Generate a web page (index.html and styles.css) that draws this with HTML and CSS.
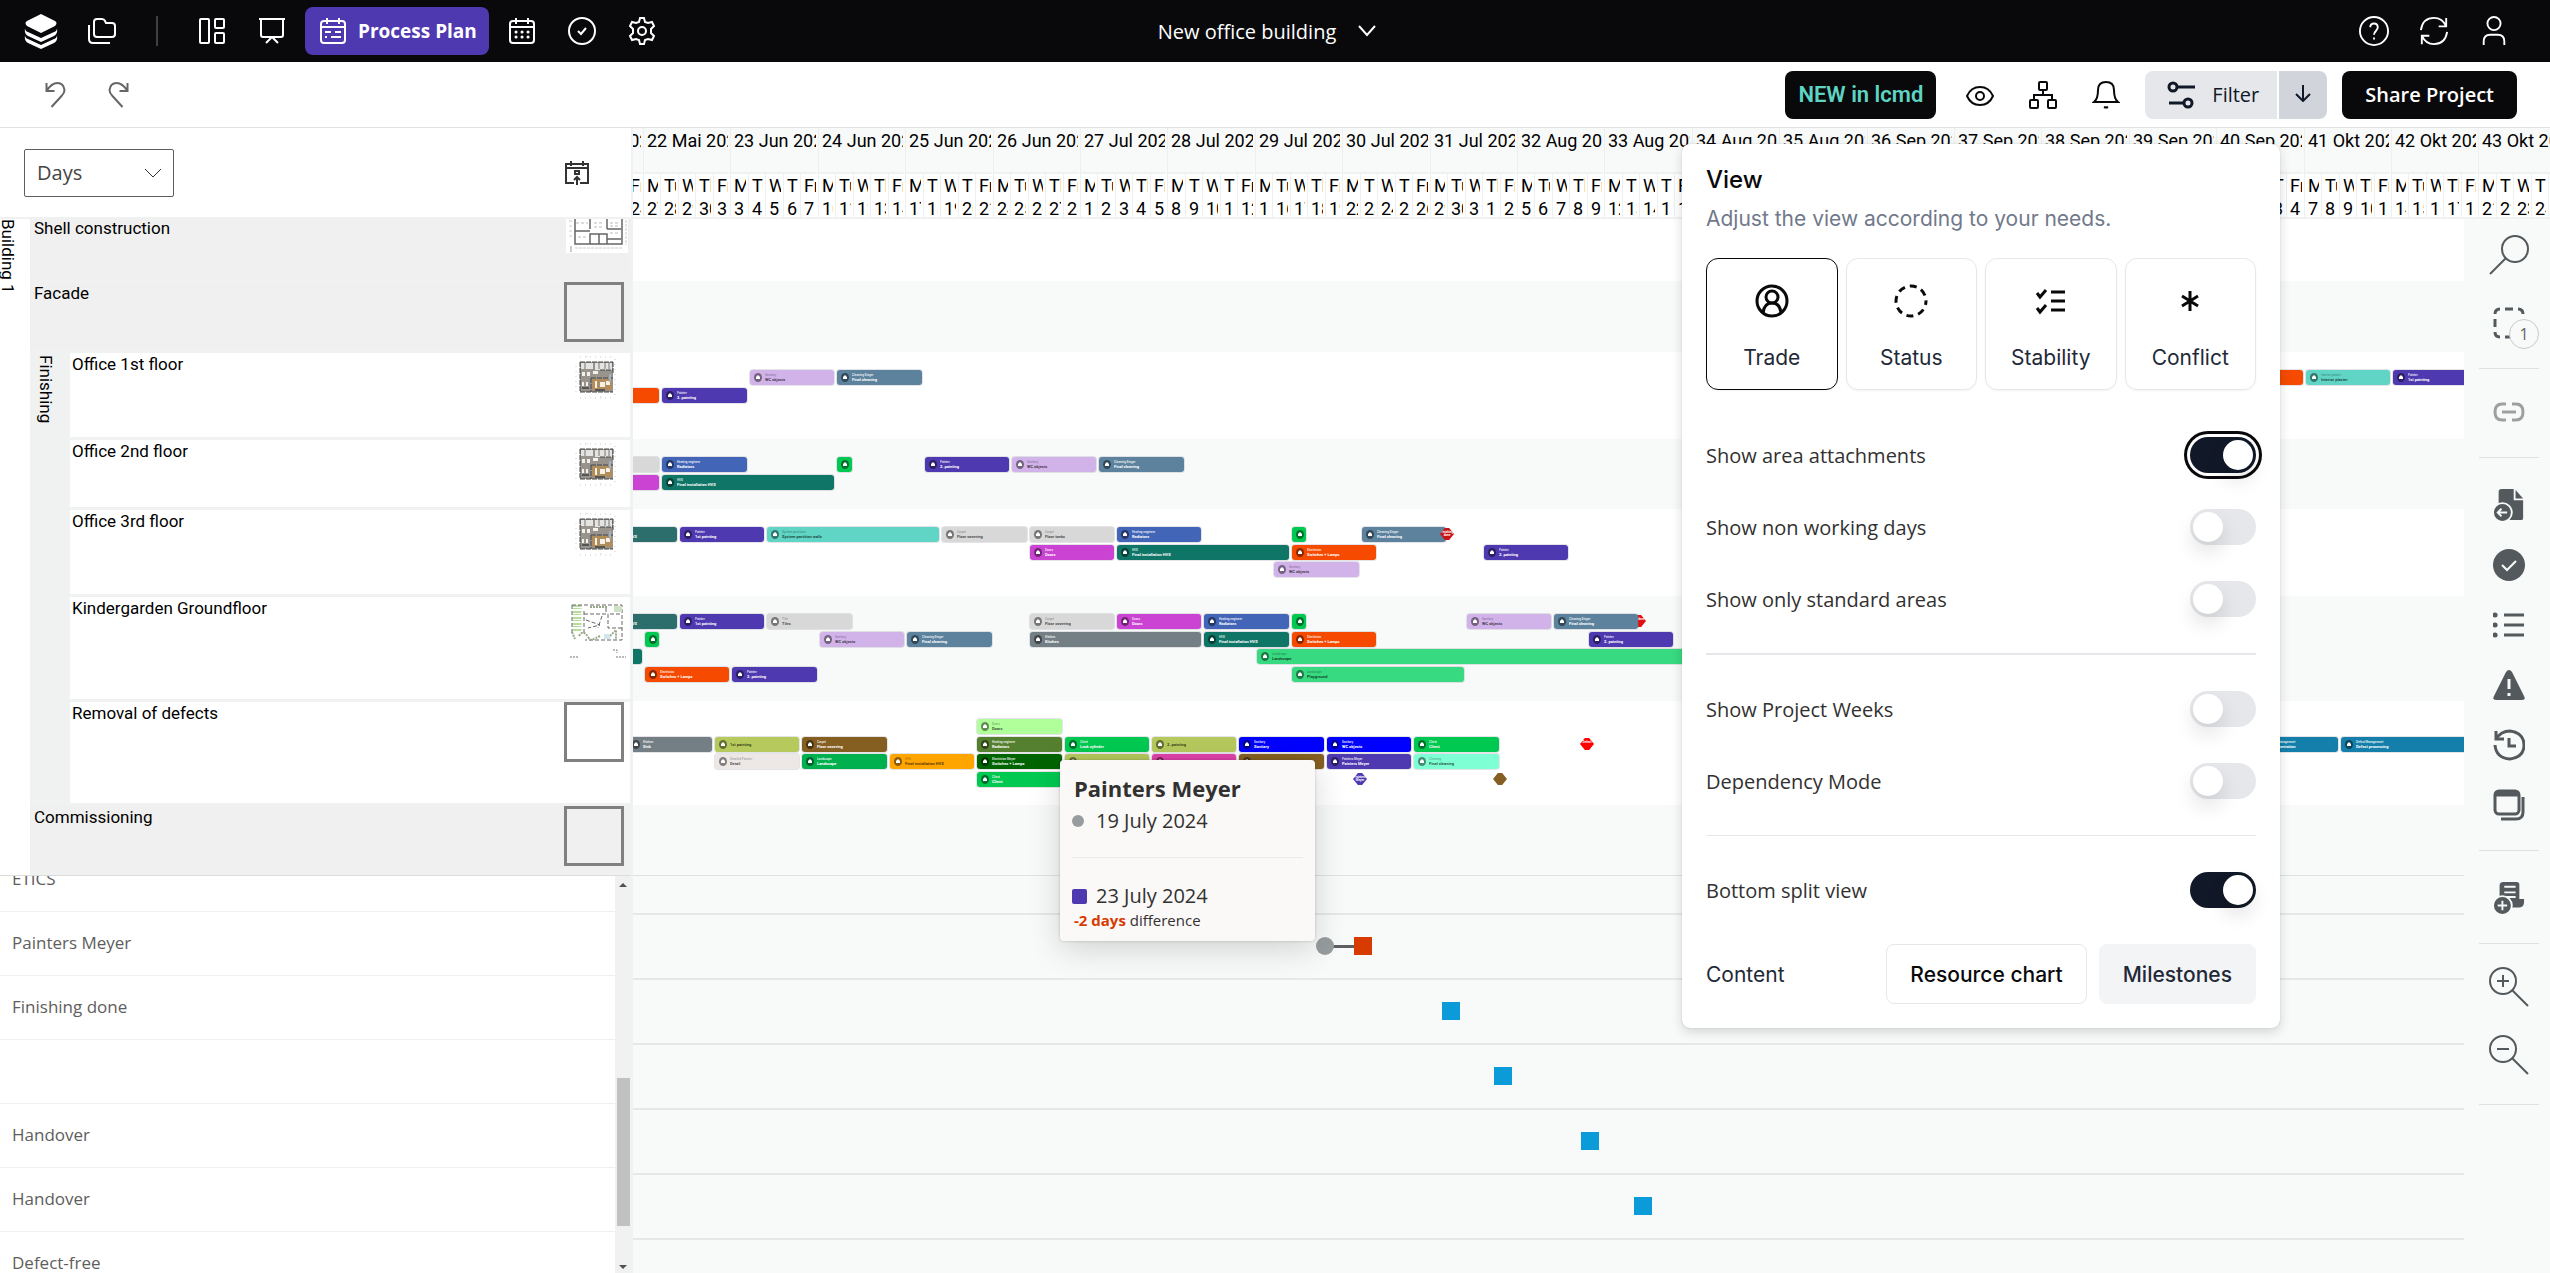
FILE: index.html
```html
<!doctype html>
<html lang="en">
<head>
    <meta charset="UTF-8">
    <meta name="viewport" content="width=device-width, initial-scale=1.0">
    <title>New office building - Process Plan</title>
    <link rel="stylesheet" href="styles.css">
</head>
<body>
    <!-- icon sprite -->
    <svg class="sprite" aria-hidden="true">
        <symbol id="i-floorplan" viewBox="0 0 44 44">
            <path d="M5 1h34M5 42h34M12 0v4M26 40v4M40 3v38M1 10v28" stroke="#ccc" stroke-dasharray="1 4"/>
            <rect x="5" y="6" width="33" height="30" fill="#98938d"/>
            <path d="M6 7h12v6H6zM20 7h17v7H20z" fill="#e4e4e2"/>
            <rect x="17" y="23" width="20" height="11" fill="#b08d5a"/>
            <path d="M5 6h33M5 36h33M5 6v30M38 6v12M16 22h22M25 14h13M16 22v14" stroke="#444" stroke-dasharray="5 1"/>
            <path d="M10 7v6M24 7v6M30 7v6M34 7v6" stroke="#777"/>
            <path d="M7 16h3v4H7zM12 16h3v4h-3zM18 15h5v3h-5zM20 25h2v7h-2zM25 26h5v5h-5zM31 25h4v4h-4zM7 26h2v4H7zM11 26h2v4h-2z" fill="#f4f1ea"/>
            <path d="M7 32h7M20 34h10" stroke="#555" stroke-width="2"/>
            <path d="M35 18v8" stroke="#9fb1c2" stroke-width="2"/>
        </symbol>
        <symbol id="i-shell" viewBox="0 0 62 34">
            <path fill="#fff" d="M0 0h62v34H0z"/>
            <path d="M9 0v25h47V0M24 0v10M41 0v10M9 12h15M41 10h14M24 25V15h17v10M33 15v10M41 20h14" stroke="#666" fill="none" stroke-width="1.5"/>
            <path d="M10 4h12M28 4h10M44 4h9M12 18h10M44 14h8M28 8h8M44 7h9" stroke="#bbb" stroke-dasharray="3 2"/>
            <path d="M9 29h47M60 1v25M3 2h4M3 7h4M3 12h4M3 17h4" stroke="#ccc" stroke-dasharray="3 1"/>
            <path d="M5 27v6" stroke="#999"/>
        </symbol>
        <symbol id="i-garden" viewBox="0 0 56 58">
            <path d="M7 3v27" stroke="#b5dd9c" stroke-width="9" stroke-dasharray="2 1 1 2"/>
            <path d="M2 3h50v35H15M2 3v28M14 9v22M14 12h22v-8M40 12h12M38 12v14h14M16 18l14 5-12 3M32 14l-4 12" stroke="#666" fill="none" stroke-dasharray="4 2"/>
            <path d="M9 34c3-5 6-4 9 1s5 2 12-1M2 30l3 7M40 34l6-6v10M20 5h18" stroke="#98a889" fill="none" stroke-width="2" stroke-dasharray="2 1"/>
            <path d="M44 4h8v6h-8z" fill="#cfe2c4"/>
            <path d="M34 32h6v5h-6z" fill="#cfe6ea"/>
            <path d="M0 55h8M46 55h11M43 48h4v3" stroke="#777" stroke-dasharray="2 1" fill="none"/>
        </symbol>
    </svg>

    <header class="topbar">
        <nav class="topbar-nav">
            <a href="#" class="logo" aria-label="Home"><svg viewBox="0 0 34 36"><path d="M17 1 31 8q3 2 0 5L17 20 3 13q-3-3 0-5z"/><path d="M1 15q0 3 3 4l13 6 13-6q3-1 3-4 1 6-3 8l-13 6-13-6q-4-2-3-8z"/><path d="M1 22q0 3 3 4l13 6 13-6q3-1 3-4 1 6-3 8l-13 6-13-6q-4-2-3-8z"/></svg></a>
            <a href="#" class="nav-icon" aria-label="Projects"><svg viewBox="0 0 28 28"><path d="M9 2h5q2 0 3 2l1 2h6q3 0 3 3v8q0 3-3 3H9q-3 0-3-3V5q0-3 3-3zM1 8v14q0 4 4 4h17"/></svg></a>
            <span class="nav-divider"></span>
            <a href="#" class="nav-icon" aria-label="Dashboard"><svg viewBox="0 0 28 28"><rect x="2" y="2" width="9" height="24" rx="1"/><rect x="17" y="2" width="9" height="9" rx="1"/><rect x="17" y="16" width="9" height="10" rx="1"/></svg></a>
            <a href="#" class="nav-icon" aria-label="Board"><svg viewBox="0 0 28 28"><path d="M1 2h26M3 2v16q0 2 2 2h18q2 0 2-2V2M14 20l-6 6M14 20l6 6"/></svg></a>
            <a href="#" class="nav-active"><svg viewBox="0 0 28 28"><rect x="2" y="4" width="24" height="22" rx="3"/><path d="M8 1v6M20 1v6M2 10h24M6 15h6M16 15h6M6 20h2M12 20h10"/></svg>Process Plan</a>
            <a href="#" class="nav-icon" aria-label="Calendar"><svg viewBox="0 0 28 28"><rect x="2" y="4" width="24" height="22" rx="3"/><path d="M8 1v6M20 1v6M2 10h24"/><path d="M8 15h.1M14 15h.1M20 15h.1M8 20h.1M14 20h.1M20 20h.1" stroke-linecap="round" stroke-width="3"/></svg></a>
            <a href="#" class="nav-icon" aria-label="Tasks"><svg viewBox="0 0 28 28"><circle cx="14" cy="14" r="13"/><path d="m10 14 3 3 5-6"/></svg></a>
            <a href="#" class="nav-icon" aria-label="Settings"><svg viewBox="0 0 28 28"><path d="m12 1-1 4-3 1-4-1-2 4 3 3v4l-3 3 2 4 4-1 3 1 1 4h4l1-4 3-1 4 1 2-4-3-3v-4l3-3-2-4-4 1-3-1-1-4z"/><circle cx="14" cy="14" r="4"/></svg></a>
        </nav>
        <button class="project-name">New office building <svg viewBox="0 0 18 12"><path d="m1 1 8 9 8-9"/></svg></button>
        <nav class="topbar-user">
            <a href="#" aria-label="Help"><svg viewBox="0 0 32 32"><circle cx="16" cy="16" r="15"/><path d="M12 12q0-4 4-4t4 4q0 2-2 4t-2 4M16 23v2"/></svg></a>
            <a href="#" aria-label="Refresh"><svg viewBox="0 0 32 32"><path d="M2 15Q4 2 16 2q9 0 13 9M29 2v9h-8M30 17q-2 13-14 13-9 0-13-9M3 30v-9h8"/></svg></a>
            <a href="#" aria-label="Account"><svg viewBox="0 0 32 32"><circle cx="16" cy="8" r="7"/><path d="M5 31v-4q0-7 7-7h8q7 0 7 7v4"/></svg></a>
        </nav>
    </header>

    <div class="toolbar">
        <div class="history">
            <button aria-label="Undo"><svg viewBox="0 0 20 26"><path d="M1 1v8h8M1 9q5-8 11-8t7 7q0 3-3 6L6 25"/></svg></button>
            <button aria-label="Redo"><svg viewBox="0 0 20 26"><path d="M19 1v8h-8M19 9q-5-8-11-8T1 8q0 3 3 6l10 11"/></svg></button>
        </div>
        <div class="tools">
            <button class="btn-dark btn-new">NEW in lcmd</button>
            <button class="tool" aria-label="View"><svg viewBox="0 0 28 28"><path d="M1 15Q5 6 14 6t13 9q-4 9-13 9T1 15z"/><circle cx="14" cy="15" r="4"/></svg></button>
            <button class="tool" aria-label="Structure"><svg viewBox="0 0 28 28"><rect x="10" y="1" width="8" height="8" rx="1"/><rect x="1" y="19" width="8" height="8" rx="1"/><rect x="19" y="19" width="8" height="8" rx="1"/><path d="M14 9v5M5 19v-5h18v5"/></svg></button>
            <button class="tool" aria-label="Notifications"><svg viewBox="0 0 28 28"><path d="M2 21q4-3 4-12 0-8 8-8t8 8q0 9 4 12zM12 26q2 1 4 0"/></svg></button>
            <div class="filter">
                <button class="filter-main"><svg viewBox="0 0 28 28"><circle cx="6" cy="6" r="4"/><path d="M11 6h17M2 22h14"/><circle cx="21" cy="22" r="4"/></svg>Filter</button>
                <button class="filter-more" aria-label="Filter options"><svg viewBox="0 0 18 18"><path d="M9 1v16M2 10l7 7 7-7"/></svg></button>
            </div>
            <button class="btn-dark">Share Project</button>
        </div>
    </div>

    <main>
        <div class="scale-row">
            <div class="scale-settings">
                <div class="select">
                    <select aria-label="Scale"><option>Days</option><option>Weeks</option></select>
                    <svg viewBox="0 0 18 10"><path d="m1 1 8 8 8-8"/></svg>
                </div>
                <button class="today" aria-label="Go to today"><svg viewBox="0 0 24 24"><path d="M9 22H1V3h22v19h-8M1 7h22M6 0v5M18 0v5M10 10h4v3h-4zM12 24v-8M9 19l3-3 3 3"/></svg></button>
            </div>
            <div class="scale" id="scale"></div>
        </div>

        <div class="workspace">
            <div class="left">
                <div class="tree">
                    <div class="building">Building 1</div>
                    <div class="area area-wide area-scrolled">Shell construction <svg class="thumb-shell"><use href="#i-shell"/></svg></div>
                    <div class="area area-wide">Facade <span class="thumb-empty"></span></div>
                    <div class="group">Finishing</div>
                    <div class="area">Office 1st floor <svg class="thumb-plan"><use href="#i-floorplan"/></svg></div>
                    <div class="area">Office 2nd floor <svg class="thumb-plan"><use href="#i-floorplan"/></svg></div>
                    <div class="area">Office 3rd floor <svg class="thumb-plan"><use href="#i-floorplan"/></svg></div>
                    <div class="area">Kindergarden Groundfloor <svg class="thumb-garden"><use href="#i-garden"/></svg></div>
                    <div class="area">Removal of defects <span class="thumb-empty"></span></div>
                    <div class="area area-wide">Commissioning <span class="thumb-empty"></span></div>
                </div>
                <div class="milestone-names">
                    <ul>
                        <li>ETICS</li>
                        <li>Painters Meyer</li>
                        <li>Finishing done</li>
                        <li></li>
                        <li>Handover</li>
                        <li>Handover</li>
                        <li>Defect-free</li>
                    </ul>
                    <div class="scrollbar">
                        <span class="arrow-up"></span>
                        <span class="thumb"></span>
                        <span class="arrow-down"></span>
                    </div>
                </div>
            </div>

            <div class="right">
                <div class="chart" id="chart"></div>
                <div class="milestones" id="milestones"></div>

                <div class="tooltip">
                    <h3>Painters Meyer</h3>
                    <p><span class="mark-old"></span>19 July 2024</p>
                    <hr>
                    <p><span class="mark-new"></span>23 July 2024</p>
                    <small><b>-2 days</b> difference</small>
                </div>
            </div>

            <aside class="rail">
                <div class="rail-group rail-search">
                    <button aria-label="Search"><svg class="large" viewBox="0 0 40 40"><circle cx="26" cy="14" r="13"/><path d="M17 23 1 39"/></svg></button>
                    <button aria-label="Selection"><svg viewBox="0 0 32 32"><path d="M2 7q0-5 5-5M12 2h8M25 2q5 0 5 5M2 12v8M2 25q0 5 5 5M12 30h6" stroke-width="3"/></svg><span class="badge">1</span></button>
                </div>
                <div class="rail-group muted">
                    <button aria-label="Link"><svg viewBox="0 0 32 32"><path d="M13 8H9q-7 0-7 8t7 8h4M19 8h4q7 0 7 8t-7 8h-4M9 16h14" stroke-width="3"/></svg></button>
                </div>
                <div class="rail-group rail-main">
                    <button aria-label="Import"><svg viewBox="0 0 32 34"><path class="solid" d="M8 0h13v12h10v19q0 2-2 2H8q-3 0-3-3V3q0-3 3-3z"/><path class="solid" d="m23 1 8 9h-8z"/><circle class="ring" cx="9" cy="25" r="10"/><path class="cut" d="M4 25h10M8 21l-4 4 4 4"/></svg></button>
                    <button aria-label="Done"><svg viewBox="0 0 32 32"><circle class="solid" cx="16" cy="16" r="16"/><path class="cut" d="m9 16 5 5 9-9"/></svg></button>
                    <button aria-label="List"><svg viewBox="0 0 32 32"><path d="M11 6h20M11 16h20M11 26h20" stroke-width="3"/><path d="M2 6h.1M2 16h.1M2 26h.1" stroke-width="5" stroke-linecap="round"/></svg></button>
                    <button aria-label="Warnings"><svg viewBox="0 0 32 32"><path class="solid" d="M13 3q3-4 6 0l12 24q2 4-2 4H3q-4 0-2-4z"/><path class="cut" d="M16 10v10M16 24v3" stroke-width="3"/></svg></button>
                    <button aria-label="History"><svg viewBox="0 0 32 32"><path d="M3 2v8h8M3 10Q8 2 17 2q14 2 14 14T17 30Q3 29 2 16M16 9v8h7" stroke-width="3"/></svg></button>
                    <button aria-label="Views"><svg viewBox="0 0 32 32"><rect x="2" y="2" width="24" height="23" rx="4" stroke-width="3"/><path d="M2 5h24" stroke-width="5"/><path d="M30 8v15q0 7-7 7H8" stroke-width="3"/></svg></button>
                </div>
                <div class="rail-group rail-note">
                    <button aria-label="Add note"><svg viewBox="0 0 32 34"><path class="solid" d="M10 0h14q3 0 3 3v15h5v3q0 6-5 6H6V4q0-4 4-4z"/><path class="cut" d="M11 5h12M11 11h12M11 16h12"/><circle class="ring" cx="9" cy="25" r="10"/><path class="cut" d="M4 25h10M9 20v10"/></svg></button>
                </div>
                <div class="rail-group">
                    <button aria-label="Zoom in"><svg class="large" viewBox="0 0 40 40"><circle cx="14" cy="14" r="13"/><path d="m23 23 16 16M8 14h12M14 8v12"/></svg></button>
                    <button aria-label="Zoom out"><svg class="large" viewBox="0 0 40 40"><circle cx="14" cy="14" r="13"/><path d="m23 23 16 16M8 14h12"/></svg></button>
                </div>
            </aside>
        </div>

        <section class="view-panel">
            <h2>View</h2>
            <p>Adjust the view according to your needs.</p>
            <div class="modes">
                <button class="mode selected"><svg viewBox="0 0 34 34"><circle cx="17" cy="17" r="15"/><circle cx="17" cy="13" r="6"/><path d="M8 29q1-10 9-10t9 10"/></svg>Trade</button>
                <button class="mode"><svg viewBox="0 0 34 34"><circle cx="17" cy="17" r="15" stroke-dasharray="7 5" stroke-dashoffset="3"/></svg>Status</button>
                <button class="mode"><svg viewBox="0 0 34 34"><path d="m3 9 3 4 6-7M3 24l3 4 6-7M17 8h14M17 17h14M17 26h14"/></svg>Stability</button>
                <button class="mode"><svg viewBox="0 0 34 34"><path d="M17 7v20M9 12l16 10M25 12 9 22"/></svg>Conflict</button>
            </div>
            <div class="switches">
                <label>Show area attachments <input type="checkbox" class="focused" checked></label>
                <label>Show non working days <input type="checkbox"></label>
                <label>Show only standard areas <input type="checkbox"></label>
                <hr class="thick">
                <label>Show Project Weeks <input type="checkbox"></label>
                <label>Dependency Mode <input type="checkbox"></label>
                <hr>
                <label>Bottom split view <input type="checkbox" checked></label>
                <div class="content-row">
                    <span>Content</span>
                    <button>Resource chart</button>
                    <button class="active">Milestones</button>
                </div>
            </div>
        </section>
    </main>

    <script src="plan.js"></script>
</body>
</html>
```
FILE: styles.css
```css
* {
    box-sizing: border-box;
}

:root {
    --left: 633px;
    --rows: 62px 71px 87px 70px 87px 105px 104px 70px;
    --ui: "Open Sans", "Noto Sans", sans-serif;
    --plan: Roboto, sans-serif;
    --panel: Inter, sans-serif;
}

body {
    margin: 0;
    height: 100vh;
    display: flex;
    flex-direction: column;
    overflow: hidden;
    background: #fff;
    font-family: var(--ui);
    font-size: 20px;
    color: #323130;
}

button {
    font: inherit;
    color: inherit;
    border: none;
    background: none;
    padding: 0;
    cursor: pointer;
}

svg {
    fill: none;
    stroke: currentColor;
    stroke-width: 2;
    flex: none;
}

.sprite {
    display: none;
}

/* top bar */

.topbar {
    height: 62px;
    background: #09090b;
    color: #fff;
    display: grid;
    grid-template-columns: 1fr auto 1fr;
    align-items: center;
    padding: 0 40px 0 24px;
}

.topbar-nav {
    display: flex;
    align-items: center;
    gap: 32px;
}

.topbar-nav svg {
    display: block;
    width: 28px;
    height: 28px;
}

.topbar a {
    color: #fff;
    text-decoration: none;
}

.topbar-nav .logo {
    margin-right: -2px;
}

.topbar-nav .logo svg {
    width: 34px;
    height: 36px;
    fill: #fff;
    stroke: none;
}

.nav-divider {
    width: 2px;
    height: 30px;
    margin: 0 8px;
    background: #3f3f46;
}

.nav-active {
    display: flex;
    align-items: center;
    gap: 11px;
    height: 48px;
    padding: 0 12px 0 14px;
    margin: 0 -13px;
    border-radius: 8px;
    background: #4f39b1;
    font-weight: bold;
    font-size: 19px;
}

.project-name {
    display: flex;
    align-items: center;
    gap: 22px;
}

.project-name svg {
    width: 18px;
    height: 12px;
}

.topbar-user {
    display: flex;
    justify-content: flex-end;
    gap: 28px;
}

.topbar-user svg {
    display: block;
    width: 32px;
    height: 30px;
}

/* toolbar */

.toolbar {
    height: 66px;
    display: flex;
    align-items: center;
    justify-content: space-between;
    padding: 0 33px 0 44px;
    border-bottom: 1px solid #e1e1e1;
}

.history {
    display: flex;
    gap: 40px;
    color: #666;
}

.history svg {
    display: block;
    width: 23px;
    height: 26px;
}

.tools {
    display: flex;
    align-items: center;
    color: #09090b;
}

.tool {
    display: flex;
    width: 63px;
    justify-content: center;
}

.tool svg {
    width: 28px;
    height: 28px;
}

.btn-dark {
    height: 48px;
    padding: 0 23px;
    border-radius: 8px;
    background: #09090b;
    color: #fff;
    font-weight: 600;
}

.btn-new {
    padding: 0 13px;
    margin-right: 12px;
    color: #5ed4c3;
    font-family: var(--plan);
    font-size: 22px;
}

.filter {
    display: flex;
    gap: 2px;
    height: 48px;
    margin: 0 15px 0 8px;
    border-radius: 8px;
    overflow: hidden;
    color: #111827;
}

.filter-main {
    display: flex;
    align-items: center;
    gap: 17px;
    padding: 0 18px 0 22px;
    background: #e5e7eb;
}

.filter-main svg {
    width: 28px;
    height: 28px;
    stroke-width: 3;
}

.filter-more {
    width: 48px;
    background: #d1d5db;
}

.filter-more svg {
    width: 18px;
    height: 18px;
}

/* scale header */

main {
    position: relative;
    flex: 1;
    min-height: 0;
    display: flex;
    flex-direction: column;
}

.scale-row {
    display: flex;
    height: 91px;
    border-bottom: 2px solid #f0f1f1;
}

.scale-settings {
    width: var(--left);
    flex: none;
    display: flex;
    align-items: center;
    justify-content: space-between;
    padding: 0 42px 0 24px;
    border-right: 2px solid #f0f1f1;
}

.select {
    position: relative;
    width: 150px;
}

.select select {
    appearance: none;
    width: 100%;
    height: 48px;
    padding: 0 12px;
    border: 1px solid #605e5c;
    border-radius: 2px;
    background: #fff;
    font: inherit;
    color: #444;
}

.select svg {
    position: absolute;
    right: 12px;
    top: 19px;
    width: 18px;
    height: 10px;
    stroke-width: 1;
}

.today svg {
    display: block;
    width: 24px;
    height: 24px;
    color: #333;
}

.scale {
    position: relative;
    flex: 1;
    overflow: hidden;
    background: #f8faf9;
    font-family: var(--plan);
    font-size: 18px;
    color: #000;
}

/* weeks and days stand on the same free time axis as the bars */
.week,
.day {
    position: absolute;
    overflow: hidden;
    white-space: nowrap;
    padding-left: 3px;
    border-left: 1px solid #edf0f0;
}

.week {
    top: 0;
    height: 46px;
    line-height: 26px;
    border-right: 2px solid #f8faf9;
    border-bottom: 2px solid #f0f2f2;
}

.day {
    top: 46px;
    height: 44px;
    line-height: 23px;
    border-right: 2px solid #fff;
    background: #fff;
}

.day span {
    display: block;
}

/* workspace */

.workspace {
    flex: 1;
    min-height: 0;
    display: flex;
}

.left {
    width: var(--left);
    flex: none;
    display: flex;
    flex-direction: column;
    border-right: 2px solid #f0f1f1;
}

.tree {
    flex: none;
    display: grid;
    grid-template-columns: 30px 40px 1fr;
    grid-template-rows: var(--rows);
    background: #f0f1f1;
    font-family: var(--plan);
    font-size: 17px;
    color: #000;
}

.building,
.group {
    writing-mode: vertical-rl;
    line-height: 20px;
}

.building {
    grid-row: 1 / -1;
    background: #fff;
    padding-right: 12px;
}

.group {
    grid-row: 3 / 8;
    grid-column: 2;
    padding: 3px 14px 0 0;
}

.area {
    grid-column: 3;
    display: flex;
    justify-content: space-between;
    margin: 1px 1px 2px 0;
    padding-left: 2px;
    background: #fff;
    line-height: 22px;
}

.area-wide {
    grid-column: 2 / 4;
    padding-left: 4px;
    background: #f0f0f0;
}

.area-scrolled {
    margin-top: 0;
    line-height: 18px;
}

.thumb-empty {
    width: 60px;
    height: 60px;
    margin-right: 6px;
    border: 3px solid #808080;
}

.tree svg {
    stroke: none;
    stroke-width: 1;
}

.thumb-shell {
    width: 62px;
    height: 34px;
    margin-right: 2px;
}

.thumb-plan {
    width: 44px;
    height: 44px;
    margin: 3px 11px 0 0;
}

.thumb-garden {
    width: 56px;
    height: 58px;
    margin: 5px 4px 0 0;
}

.milestone-names {
    flex: 1;
    min-height: 0;
    display: flex;
    overflow: hidden;
    border-top: 1px solid #dcdcdc;
}

.milestone-names ul {
    flex: 1;
    margin: -28px 0 0;
    padding: 0;
    list-style: none;
    color: #605e5c;
    font-size: 17px;
}

.milestone-names li {
    height: 64px;
    padding-left: 12px;
    line-height: 62px;
    border-bottom: 1px solid #f0f0f0;
}

.scrollbar {
    width: 16px;
    display: flex;
    flex-direction: column;
    align-items: center;
    justify-content: space-between;
    padding: 7px 0 4px;
    background: #f1f1f1;
}

.scrollbar .thumb {
    width: 13px;
    height: 148px;
    margin: auto 0 39px;
    background: #c1c1c1;
}

.arrow-up,
.arrow-down {
    border: 4px solid transparent;
}

.arrow-up {
    border-top: none;
    border-bottom-color: #505050;
}

.arrow-down {
    border-bottom: none;
    border-top-color: #505050;
}

.right {
    position: relative;
    flex: 1;
    min-width: 0;
    display: flex;
    flex-direction: column;
}

.chart {
    flex: none;
    display: grid;
    grid-template-rows: var(--rows);
    overflow: hidden;
}

.row {
    position: relative;
}

.row:nth-child(even),
.row:last-child {
    background: #f8faf9;
}

.bar {
    position: absolute;
    display: flex;
    align-items: center;
    gap: 2px;
    height: 15px;
    padding-left: 4px;
    border-radius: 3px;
    box-shadow: 0 0 0 1px rgba(120, 120, 140, 0.2);
    overflow: hidden;
    white-space: nowrap;
    font: bold 4px/5px var(--plan);
    color: #fff;
}

.bar.dark {
    color: rgba(0, 0, 0, 0.7);
}

.bar svg {
    width: 8px;
    height: 9px;
    border-radius: 50%;
    background: rgba(0, 0, 0, 0.45);
    color: #fff;
    fill: #fff;
    stroke: none;
}

.bar small {
    display: block;
    font-size: 3px;
    line-height: 4px;
    opacity: 0.8;
}

.bar.dark small {
    opacity: 0.4;
}

.bar span {
    padding-left: 1px;
}

.diamond {
    position: absolute;
    width: 14px;
    height: 14px;
    clip-path: polygon(35% 8%, 65% 8%, 100% 50%, 65% 92%, 35% 92%, 0 50%);
    font: bold 3px/3px var(--plan);
    color: #fff;
    text-align: center;
    padding-top: 4px;
}

.diamond.front {
    z-index: 1;
}

.milestones {
    flex: 1;
    min-height: 0;
    overflow: hidden;
    border-top: 1px solid #dfe2e2;
    background: #f8faf9;
}

.lane {
    position: relative;
    height: 65px;
    border-bottom: 2px solid #e6e8e8;
}

.lane:first-child {
    height: 39px;
}

.marker,
.marker-old,
.marker-line {
    position: absolute;
    top: 22px;
    width: 18px;
    height: 18px;
    background: #0a9bd8;
}

.marker.late {
    background: #d83b01;
}

.marker-old {
    border-radius: 50%;
    background: #979c9f;
}

.marker-line {
    top: 30px;
    height: 3px;
    background: #5c6063;
}

.tooltip {
    position: absolute;
    left: 427px;
    top: 541px;
    width: 255px;
    height: 181px;
    padding: 11px 12px;
    border-radius: 4px;
    background: #faf9f8;
    box-shadow: 0 8px 32px rgba(0, 0, 0, 0.16), 0 0 3px rgba(0, 0, 0, 0.2);
}

.tooltip h3 {
    margin: 0 0 0 2px;
    font-size: 22px;
    line-height: 34px;
}

.tooltip p {
    display: flex;
    align-items: center;
    gap: 12px;
    margin: 0;
    line-height: 32px;
    font-size: 20px;
}

.tooltip hr {
    margin: 20px 0 22px;
    border: none;
    border-top: 1px solid #edebe9;
}

.tooltip small {
    display: block;
    margin-left: 2px;
    font-size: 15px;
    line-height: 16px;
}

.tooltip b {
    color: #d83b01;
}

.mark-old,
.mark-new {
    width: 12px;
    height: 12px;
    border-radius: 50%;
    background: #979c9f;
}

.mark-new {
    width: 15px;
    height: 15px;
    margin-right: -3px;
    border-radius: 2px;
    background: #4f39b1;
}

/* right tool rail */

.rail {
    width: 86px;
    flex: none;
    padding: 16px 11px 0 15px;
    background: #f8faf9;
    color: #54595d;
}

.rail-group {
    display: flex;
    flex-direction: column;
    align-items: center;
    gap: 28px;
    padding-bottom: 29px;
    margin-bottom: 27px;
    border-bottom: 1px solid #dfe2e2;
}

.rail-search {
    gap: 32px;
}

.rail-main,
.rail-note {
    padding-top: 4px;
}

.rail-note {
    margin-bottom: 23px;
}

.rail button {
    position: relative;
    display: block;
}

.rail svg {
    display: block;
    width: 32px;
    height: 32px;
}

.rail svg.large {
    width: 40px;
    height: 40px;
}

.rail .muted {
    color: #a09f9f;
}

.rail .solid {
    fill: currentColor;
    stroke: none;
}

.rail .ring {
    fill: currentColor;
    stroke: #f8faf9;
}

.rail .cut {
    stroke: #f8faf9;
}

.badge {
    position: absolute;
    left: 16px;
    top: 12px;
    width: 30px;
    height: 30px;
    border: 1px solid #c8c8c8;
    border-radius: 50%;
    background: #f8faf9;
    color: #666;
    font-size: 16px;
    line-height: 28px;
    text-align: center;
}

/* view settings popover */

.view-panel {
    position: absolute;
    top: 16px;
    right: 270px;
    width: 598px;
    padding: 22px 24px 24px;
    border-radius: 8px;
    background: #fff;
    box-shadow: 0 4px 12px rgba(0, 0, 0, 0.15), 0 0 1px rgba(0, 0, 0, 0.3);
    font-family: var(--panel);
    font-size: 21px;
    color: #09090b;
}

.view-panel h2 {
    margin: 0;
    font-size: 24px;
    line-height: 28px;
    font-weight: 500;
}

.view-panel p {
    margin: 10px 0 24px;
    line-height: 30px;
    color: #71798a;
}

.modes {
    display: grid;
    grid-template-columns: repeat(4, 1fr);
    gap: 8px;
    margin-bottom: 47px;
}

.mode {
    display: flex;
    flex-direction: column;
    align-items: center;
    gap: 27px;
    height: 132px;
    padding-top: 25px;
    border: 1px solid #e5e7eb;
    border-radius: 12px;
    box-shadow: 0 1px 2px rgba(0, 0, 0, 0.05);
    color: #1f2937;
}

.mode.selected {
    border-color: #09090b;
}

.mode svg {
    width: 34px;
    height: 34px;
    stroke-width: 3;
    color: #09090b;
}

.switches {
    display: flex;
    flex-direction: column;
    gap: 36px;
}

.switches label {
    display: flex;
    align-items: center;
    justify-content: space-between;
    height: 36px;
    font-family: var(--ui);
    font-size: 20px;
    font-weight: 500;
    color: #323130;
}

.switches input {
    appearance: none;
    width: 66px;
    height: 36px;
    margin: 0;
    padding: 3px;
    border-radius: 18px;
    background: #e5e7eb;
}

.switches input::before {
    content: "";
    display: block;
    width: 30px;
    height: 30px;
    border-radius: 50%;
    background: #fff;
    box-shadow: 0 10px 20px rgba(0, 0, 0, 0.12);
}

.switches input:checked {
    background: #111827;
}

.switches input:checked::before {
    margin-left: 30px;
}

.switches .focused {
    box-shadow: 0 0 0 3px #fff, 0 0 0 6px #09090b;
}

.switches hr {
    width: 100%;
    margin: 0;
    border: none;
    border-top: 1px solid #e5e7eb;
}

.switches .thick {
    border-top-width: 2px;
}

.content-row {
    display: flex;
    align-items: center;
    gap: 12px;
}

.content-row span {
    margin-right: auto;
    color: #1f2937;
}

.content-row button {
    height: 60px;
    padding: 0 23px;
    border: 1px solid #e5e7eb;
    border-radius: 8px;
    font-weight: 500;
}

.content-row .active {
    border-color: #f3f4f6;
    background: #f3f4f6;
    color: #1f2937;
}
```
FILE: plan.js
```js
// time axis: working days only, day 0 is Monday of week 22
const DAY = 17.48;
const ORIGIN = 10;
const x = day => Math.round(ORIGIN + day * DAY);

const months = ["Jan", "Feb", "Mrz", "Apr", "Mai", "Jun", "Jul", "Aug", "Sep", "Okt", "Nov", "Dez"];
const weekdays = ["Mo", "Tu", "We", "Th", "Fr"];

const scale = document.getElementById("scale");
for (let w = -1; w < 22; w++) {
    const monday = new Date(2024, 4, 27 + w * 7);
    const week = document.createElement("div");
    week.className = "week";
    week.style.left = x(w * 5) + "px";
    week.style.width = x(w * 5 + 5) - x(w * 5) + "px";
    week.textContent = `${22 + w} ${months[monday.getMonth()]} ${monday.getFullYear()}`;
    scale.appendChild(week);

    weekdays.forEach((name, i) => {
        // only Friday of the first week is in view
        if (w === -1 && i < 4) return;
        const date = new Date(2024, 4, 27 + w * 7 + i);
        const day = document.createElement("div");
        day.className = "day";
        day.style.left = x(w * 5 + i) + "px";
        day.style.width = x(w * 5 + i + 1) - x(w * 5 + i) + "px";
        day.innerHTML = `<span>${name}</span><span>${date.getDate()}</span>`;
        scale.appendChild(day);
    });
}

// [background, dark text]
const colors = {
    orange: ["#f54a00"], purple: ["#4f39b1"], lilac: ["#d1b3ea", 1], steel: ["#5c829e"],
    gray: ["#d8d8d8", 1], blue: ["#4265b8"], teal: ["#0f7566"], petrol: ["#2b6e6b"],
    magenta: ["#cb43d3"], mint: ["#61d5c5", 1], green: ["#00c951"], slate: ["#737f85"],
    meadow: ["#37da80", 1], lime: ["#b0ff9a", 1], olive: ["#b5c95d", 1], brown: ["#855f22"],
    pale: ["#ede8e6", 1], leaf: ["#00b04f"], amber: ["#ffa500", 1], moss: ["#55802f"],
    forest: ["#006400"], pink: ["#e043ab", 1], pure: ["#0000ff"], aqua: ["#7fffd4", 1],
    ocean: ["#147faa"]
};

// [lane, first day, days, color, trade, name]
const rows = [
    [],
    [],
    [
        [1, -4, 5, "orange", "", ""],
        [1, 1, 5, "purple", "Painter", "2. painting"],
        [0, 6, 5, "lilac", "Sanitary", "WC objects"],
        [0, 11, 5, "steel", "Cleaning Singer", "Final cleaning"],
        [0, 90, 5, "orange", "", ""],
        [0, 95, 5, "mint", "Interior plaster", "Interior plaster"],
        [0, 100, 5, "purple", "Painter", "1st painting"]
    ],
    [
        [0, -4, 5, "gray", "", ""],
        [0, 1, 5, "blue", "Heating engineer", "Radiators"],
        [0, 11, 1, "green", "", ""],
        [0, 16, 5, "purple", "Painter", "2. painting"],
        [0, 21, 5, "lilac", "Sanitary", "WC objects"],
        [0, 26, 5, "steel", "Cleaning Singer", "Final cleaning"],
        [1, -4, 5, "magenta", "", ""],
        [1, 1, 10, "teal", "HVS", "Final installation HVS"]
    ],
    [
        [0, -3, 5, "petrol", "Heating engineer", "Installation HVS"],
        [0, 2, 5, "purple", "Painter", "1st painting"],
        [0, 7, 10, "mint", "System partitions", "System partition walls"],
        [0, 17, 5, "gray", "Carpet", "Floor covering"],
        [0, 22, 5, "gray", "Carpet", "Floor tanks"],
        [0, 27, 5, "blue", "Heating engineer", "Radiators"],
        [0, 37, 1, "green", "", ""],
        [0, 41, 5, "steel", "Cleaning Singer", "Final cleaning"],
        [1, 22, 5, "magenta", "Doors", "Doors"],
        [1, 27, 10, "teal", "HVS", "Final installation HVS"],
        [1, 37, 5, "orange", "Electrician", "Switches + Lamps"],
        [1, 48, 5, "purple", "Painter", "2. painting"],
        [2, 36, 5, "lilac", "Sanitary", "WC objects"]
    ],
    [
        [0, -3, 5, "petrol", "Heating engineer", "Installation HVS"],
        [0, 2, 5, "purple", "Painter", "1st painting"],
        [0, 7, 5, "gray", "Tiler", "Tiles"],
        [0, 22, 5, "gray", "Carpet", "Floor covering"],
        [0, 27, 5, "magenta", "Doors", "Doors"],
        [0, 32, 5, "blue", "Heating engineer", "Radiators"],
        [0, 37, 1, "green", "", ""],
        [0, 47, 5, "lilac", "Sanitary", "WC objects"],
        [0, 52, 5, "steel", "Cleaning Singer", "Final cleaning"],
        [1, 0, 1, "green", "", ""],
        [1, 10, 5, "lilac", "Sanitary", "WC objects"],
        [1, 15, 5, "steel", "Cleaning Singer", "Final cleaning"],
        [1, 22, 10, "slate", "Kitchen", "Kitchen"],
        [1, 32, 5, "teal", "HVS", "Final installation HVS"],
        [1, 37, 5, "orange", "Electrician", "Switches + Lamps"],
        [1, 54, 5, "purple", "Painter", "2. painting"],
        [2, -10, 10, "teal", "", ""],
        [2, 35, 30, "meadow", "Landscape", "Landscape"],
        [3, 0, 5, "orange", "Electrician", "Switches + Lamps"],
        [3, 5, 5, "purple", "Painter", "2. painting"],
        [3, 37, 10, "meadow", "Landscape", "Playground"]
    ],
    [
        [0, 19, 5, "lime", "Doors", "Doors"],
        [1, -1, 5, "slate", "Kitchen", "Sink"],
        [1, 4, 5, "olive", "", "1st painting"],
        [1, 9, 5, "brown", "Carpet", "Floor covering"],
        [1, 19, 5, "moss", "Heating engineer", "Radiators"],
        [1, 24, 5, "green", "Client", "Lock cylinder"],
        [1, 29, 5, "olive", "", "2. painting"],
        [1, 34, 5, "pure", "Sanitary", "Sanitary"],
        [1, 39, 5, "pure", "Sanitary", "WC objects"],
        [1, 44, 5, "green", "Client", "Client"],
        [1, 92, 5, "ocean", "Defect Management", "Documentation"],
        [1, 97, 10, "ocean", "Defect Management", "Defect processing"],
        [2, 4, 5, "pale", "Detailed Planner", "Detail"],
        [2, 9, 5, "leaf", "Landscape", "Landscape"],
        [2, 14, 5, "amber", "HVS", "Final installation HVS"],
        [2, 19, 5, "forest", "Electrician Meyer", "Switches + Lamps"],
        [2, 24, 5, "olive", "", ""],
        [2, 29, 5, "pink", "System partitions", ""],
        [2, 34, 5, "brown", "Carpet", ""],
        [2, 39, 5, "purple", "Painters Meyer", "Painters Meyer"],
        [2, 44, 5, "aqua", "Cleaning", "Final cleaning"],
        [3, 19, 5, "green", "Client", "Client"]
    ],
    []
];

// [row, lane, day, color, text, in front of the bars]
const diamonds = [
    [4, 0, 46, "#c81414", "Finishing done", true],
    [5, 0, 57, "#e01010", "Handover"],
    [6, 3, 41, "#4f39b1", "Painters Meyer"],
    [6, 3, 49, "#855f22", ""],
    [6, 1, 54, "#ff0000", "Defect"]
];

const laneTop = lane => Math.round(18 + lane * 17.5);

const chart = document.getElementById("chart");
rows.forEach((bars, r) => {
    const row = document.createElement("div");
    row.className = "row";

    diamonds.filter(d => d[0] === r).forEach(([, lane, day, color, text, front]) => {
        const el = document.createElement("div");
        el.className = front ? "diamond front" : "diamond";
        el.style.left = x(day) - 7 + "px";
        el.style.top = laneTop(lane) + "px";
        el.style.background = color;
        el.textContent = text;
        row.appendChild(el);
    });

    bars.forEach(([lane, start, days, color, trade, name]) => {
        const bar = document.createElement("div");
        const [background, dark] = colors[color];
        bar.className = dark ? "bar dark" : "bar";
        bar.style.left = x(start) + 2 + "px";
        bar.style.top = laneTop(lane) + "px";
        bar.style.width = x(start + days) - x(start) - 3 + "px";
        bar.style.background = background;
        bar.innerHTML = `<svg viewBox="0 0 8 9"><path d="M2 6V4l2-2 2 2v2z"/></svg><span><small>${trade}</small>${name}</span>`;
        row.appendChild(bar);
    });

    chart.appendChild(row);
});

// bottom split view, one lane per milestone: [day, previous day]
const lanes = [null, [41.2, 39], [46.2], [49.2], [54.2], [57.2], null];
const milestones = document.getElementById("milestones");
lanes.forEach(entry => {
    const lane = document.createElement("div");
    lane.className = "lane";
    if (entry) {
        const [day, previous] = entry;
        const left = x(day) - 9;
        if (previous) {
            const from = x(previous);
            lane.innerHTML = `<span class="marker-line" style="left:${from}px;width:${left - from}px"></span>
                <span class="marker-old" style="left:${from - 9}px"></span>
                <span class="marker late" style="left:${left}px"></span>`;
        } else {
            lane.innerHTML = `<span class="marker" style="left:${left}px"></span>`;
        }
    }
    milestones.appendChild(lane);
});
```
